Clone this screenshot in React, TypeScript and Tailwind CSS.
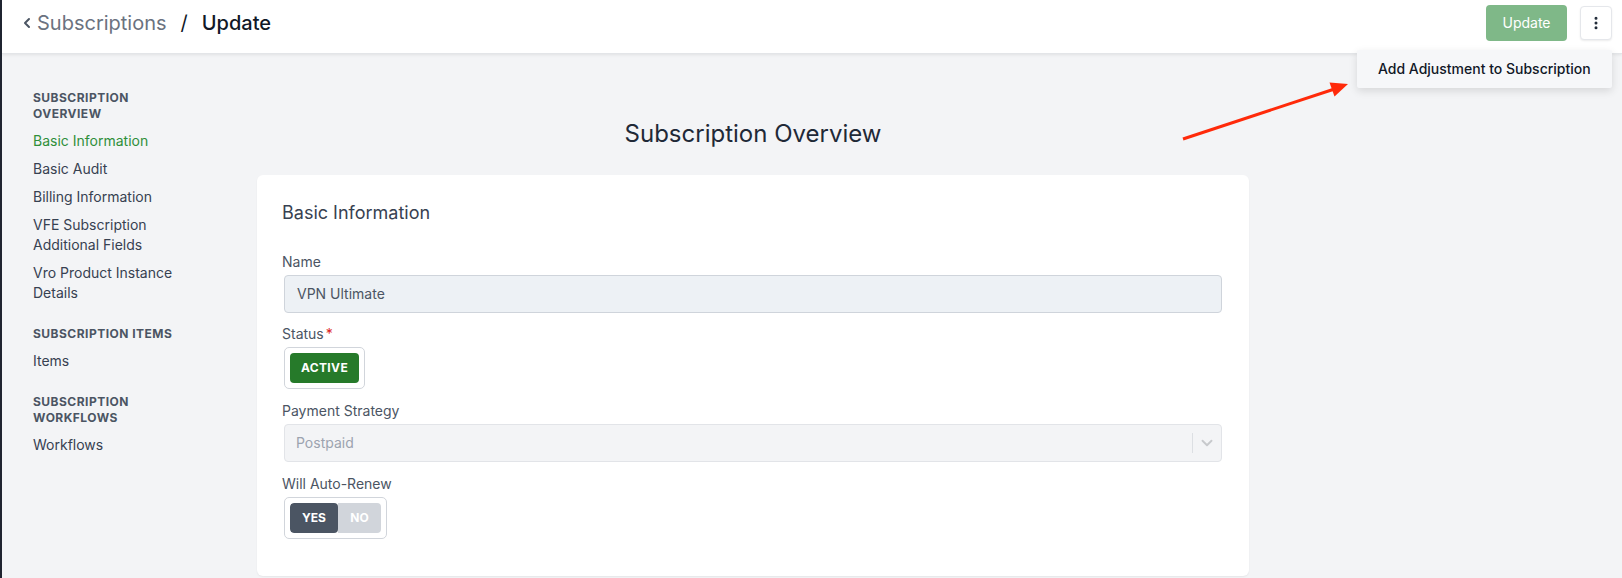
import { ChevronLeft, ChevronDown, MoreVertical } from "lucide-react";

const sections = [
    {
        title: "Subscription Overview",
        items: ["Basic Information", "Basic Audit", "Billing Information", "VFE Subscription Additional Fields", "Vro Product Instance Details"],
    },
    { title: "Subscription Items", items: ["Items"] },
    { title: "Subscription Workflows", items: ["Workflows"] },
];

function Header() {
    return (
        <div className="relative z-10 h-[54px] bg-white border-b border-[#e3e5e8] shadow-[0_1px_3px_rgba(0,0,0,0.08)] pt-[5px] pl-[17px] pr-[10px]">
            <div className="h-[36px] flex items-center justify-between">
                <div className="flex items-center text-[20px] leading-7">
                    <ChevronLeft className="w-[16px] h-[16px] text-[#4b5563] mr-[2px]" strokeWidth={3} />
                    <span className="text-[#6b7280]">Subscriptions</span>
                    <span className="text-[#111827] mx-[14px]">/</span>
                    <span className="text-[#111827] font-medium">Update</span>
                </div>
                <div className="relative flex items-center gap-[13px]">
                    <button className="h-[36px] w-[81px] rounded-[4px] bg-[#7fb888] text-white text-sm">Update</button>
                    <button className="h-[34px] w-[32px] rounded-[4px] bg-white border border-[#e5e7eb] shadow-[0_1px_2px_rgba(0,0,0,0.08)] flex items-center justify-center">
                        <MoreVertical className="w-[16px] h-[16px] text-[#1f2937]" strokeWidth={2.5} />
                    </button>
                    <div className="absolute right-0 top-[45px] w-[255px] h-[38px] bg-[#f6f7f9] shadow-[0_3px_8px_rgba(0,0,0,0.12)] rounded-[2px] flex items-center pl-[21px] text-sm font-medium text-[#111827] whitespace-nowrap">
                        Add Adjustment to Subscription
                    </div>
                </div>
            </div>
        </div>
    );
}

function Sidebar() {
    return (
        <div className="w-[181px] shrink-0 pl-[31px] pt-[36px]">
            <div className="w-[150px] flex flex-col gap-[23px]">
                {sections.map((s, si) => (
                    <div key={s.title}>
                        <p className="text-xs leading-4 font-bold uppercase tracking-[0.04em] text-[#4b5563]">{s.title}</p>
                        <div className="mt-[9px] flex flex-col gap-2">
                            {s.items.map((it, i) => (
                                <p
                                    key={it}
                                    className={`text-sm leading-5 ${si === 0 && i === 0 ? "text-[#2f8f3a]" : "text-[#374151]"}`}
                                >
                                    {it}
                                </p>
                            ))}
                        </div>
                    </div>
                ))}
            </div>
        </div>
    );
}

function Label({ text, required }: { text: string; required?: boolean }) {
    return (
        <p className="text-sm leading-5 text-[#4b5563] mb-[3px]">
            {text}
            {required && <span className="text-[#dc2626] ml-[2px]">*</span>}
        </p>
    );
}

function Card() {
    return (
        <div className="w-[992px] bg-white rounded-[6px] shadow-[0_1px_2px_rgba(0,0,0,0.06)] px-[25px] pt-[24px] pb-[37px]">
            <h2 className="text-[18px] leading-7 text-[#374151]">Basic Information</h2>

            <div className="mt-[25px]">
                <Label text="Name" />
                <div className="mx-[2px] h-[38px] rounded-[4px] bg-[#edf1f5] border border-[#cfd4db] flex items-center px-[12px] text-sm text-[#4b5563]">
                    VPN Ultimate
                </div>
            </div>

            <div className="mt-[11px]">
                <Label text="Status" required />
                <div className="ml-[2px] w-[81px] h-[42px] rounded-[5px] border border-[#d1d5db] p-[5px]">
                    <div className="h-full rounded-[4px] bg-[#267a2a] flex items-center justify-center text-xs font-bold text-white tracking-[0.03em]">
                        ACTIVE
                    </div>
                </div>
            </div>

            <div className="mt-[12px]">
                <Label text="Payment Strategy" />
                <div className="mx-[2px] h-[38px] rounded-[4px] bg-[#f3f4f6] border border-[#e2e4e8] flex items-center text-sm text-[#9ca3af]">
                    <span className="flex-1 pl-[11px]">Postpaid</span>
                    <span className="w-px h-[20px] bg-[#dcdfe3]" />
                    <span className="w-[28px] flex items-center justify-center">
                        <ChevronDown className="w-[18px] h-[18px] text-[#c7c9cc]" strokeWidth={2.5} />
                    </span>
                </div>
            </div>

            <div className="mt-[12px]">
                <Label text="Will Auto-Renew" />
                <div className="ml-[2px] w-[103px] h-[42px] rounded-[5px] border border-[#d1d5db] p-[5px]">
                    <div className="h-full flex rounded-[4px] overflow-hidden text-xs font-bold text-white">
                        <div className="w-[48px] bg-[#4b5563] rounded-[4px] flex items-center justify-center">YES</div>
                        <div className="flex-1 bg-[#d1d5db] flex items-center justify-center">NO</div>
                    </div>
                </div>
            </div>
        </div>
    );
}

export default function App() {
    return (
        <div
            className="relative w-full h-[578px] overflow-hidden bg-[#f3f4f6] border-l-2 border-[#1f2430]"
            style={{ fontFamily: "Inter, 'Noto Sans', sans-serif" }}
        >
            <Header />
            <div className="flex">
                <Sidebar />
                <div className="pl-[74px] pt-[64px]">
                    <h1 className="text-center text-[24px] leading-8 text-[#1f2937]">Subscription Overview</h1>
                    <div className="mt-[25px]">
                        <Card />
                    </div>
                </div>
            </div>
            {/* annotation arrow */}
            <svg className="absolute left-0 top-0 pointer-events-none" width="1620" height="578" viewBox="2 0 1620 578">
                <line x1="1183" y1="139" x2="1333" y2="89.5" stroke="#ff2a0a" strokeWidth="3" />
                <polygon points="1348,84 1329.5,82.5 1334.5,96.5" fill="#ff2a0a" />
            </svg>
        </div>
    );
}
